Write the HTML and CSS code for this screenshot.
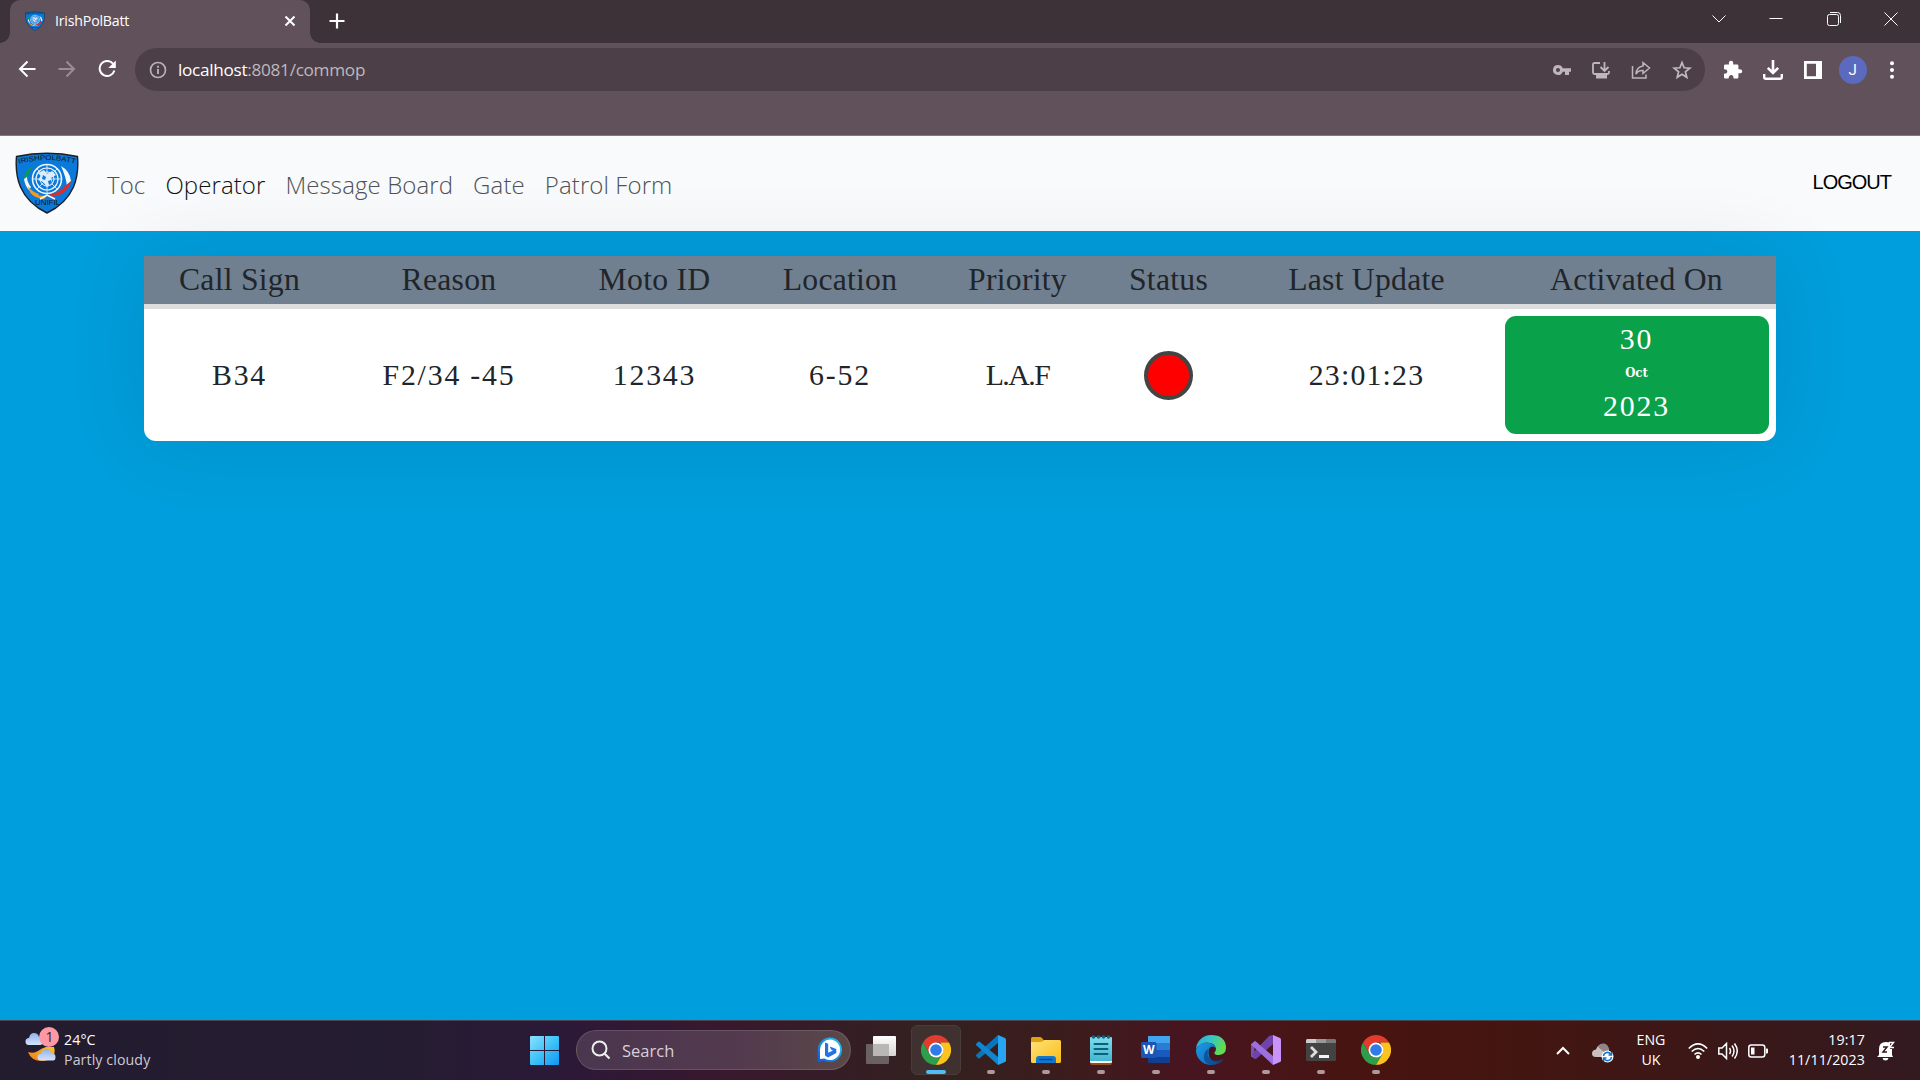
FILE: index.html
```html
<!DOCTYPE html>
<html lang="en">
<head>
<meta charset="utf-8">
<title>IrishPolBatt</title>
<link rel="stylesheet" href="styles.css">
</head>
<body>
<svg width="0" height="0" class="defs" aria-hidden="true">
  <defs>
    <linearGradient id="win" x1="0" y1="0" x2="1" y2="1"><stop offset="0" stop-color="#8be1fd"/><stop offset=".5" stop-color="#3fc3f9"/><stop offset="1" stop-color="#0f96f4"/></linearGradient>
    <linearGradient id="folder" x1="0" y1="0" x2="1" y2="1"><stop offset="0" stop-color="#ffe27a"/><stop offset="1" stop-color="#fbbc15"/></linearGradient>
    <linearGradient id="note" x1="0" y1="0" x2="0" y2="1"><stop offset="0" stop-color="#7fdcec"/><stop offset="1" stop-color="#45b5d2"/></linearGradient>
    <linearGradient id="edgeTop" x1="0" y1="0" x2="1" y2=".4"><stop offset="0" stop-color="#2aa5dc"/><stop offset=".5" stop-color="#35c6c9"/><stop offset="1" stop-color="#63dc4e"/></linearGradient>
    <linearGradient id="edgeLow" x1="0" y1="0" x2="1" y2="1"><stop offset="0" stop-color="#1b9de2"/><stop offset="1" stop-color="#0b62c0"/></linearGradient>
    <linearGradient id="bing" x1="0" y1="1" x2="1" y2="0"><stop offset="0" stop-color="#1555d6"/><stop offset="1" stop-color="#23d0f2"/></linearGradient>
    <linearGradient id="pane" x1="0" y1="0" x2="0" y2="1"><stop offset="0" stop-color="#fff"/><stop offset="1" stop-color="#d6d3d3"/></linearGradient>
    <linearGradient id="cloud" x1="0" y1="0" x2="0" y2="1"><stop offset="0" stop-color="#8fb2ee"/><stop offset="1" stop-color="#d5e3fa"/></linearGradient>
    <linearGradient id="moon" x1="0" y1="1" x2="1" y2="0"><stop offset="0" stop-color="#f07a16"/><stop offset="1" stop-color="#f9c52c"/></linearGradient>
    <symbol id="badge" viewBox="0 0 64 62">
      <path d="M1.500 4.500Q32-2 62.500 4.500Q64 22 58.500 35Q51 52 32 61Q13 52 5.500 35Q0 22 1.500 4.500Z" fill="#0a79d9" stroke="#1a1e25" stroke-width="1.400"/>
      <path id="arc" d="M4 12Q32 4 61 12" fill="none"/>
      <text class="badge-text"><textPath href="#arc" textLength="57" lengthAdjust="spacingAndGlyphs">IRISHPOLBATT</textPath></text>
      <g fill="none" stroke="#eef6fd">
        <circle cx="32" cy="27" r="14.500" stroke-width="1.600"/><circle cx="32" cy="27" r="11" stroke-width="1.200"/><circle cx="32" cy="27" r="7" stroke-width="1"/>
        <path d="M32 12V42M17 27H47M21.500 16.500L42.500 37.500M42.500 16.500L21.500 37.500" stroke-width=".8"/>
      </g>
      <path d="M23 21l6-3 3 4 5-3 4 4-5 3 2 5-6 4-4-5-5-2 3-4z" fill="#dcecfa"/>
      <path d="M28 23l3 2-1 3-3-1zM33 29l3-1 1 3-3 2z" fill="#0a79d9"/>
      <path d="M18 14q-9 4-9 14l3 2q0-7 6-16z" fill="#0c9a4d"/>
      <path d="M9 27q1 7 5 11l2-3q-4-5-4-10z" fill="#f4f7fa"/>
      <path d="M13 36q6 9 19 8l-3 3q-11 0-16-11z" fill="#f49a1c"/>
      <path d="M13 34q4 6 11 8l-3 3q-7-3-8-11z" fill="#f49a1c"/>
      <path d="M46 14q9 5 10 15l-4 5q-1-9-6-20z" fill="#f4f7fa"/>
      <path d="M56 29q-2 13-20 16l-4-2q13-2 18-9z" fill="#e02b2b"/>
      <path d="M25 47l7-4 8 4" stroke="#fff" stroke-width="1.500" fill="none"/>
      <text x="20" y="53" textLength="25" lengthAdjust="spacingAndGlyphs" class="badge-text">UNIFIL</text>
    </symbol>
    <symbol id="chrome" viewBox="0 0 30 30">
      <path d="M15 0A15 15 0 0 1 28 7.500H15L8.500 18.800 2 7.500A15 15 0 0 1 15 0Z" fill="#e33b2e"/>
      <path d="M2 7.500L8.500 18.750Q11 22.500 15 22.500L21.500 18.750 15 30A15 15 0 0 1 2 7.500Z" fill="#2f9e4b"/>
      <path d="M28 7.500A15 15 0 0 1 15 30L21.500 18.750Q23.800 13 19 7.500Z" fill="#fcc31e"/>
      <circle cx="15" cy="15" r="7.500" fill="#fff"/><circle cx="15" cy="15" r="5.800" fill="#2f7be8"/>
    </symbol>
  </defs>
</svg>

<div class="screen">
  <header class="tabstrip">
    <div class="tab">
      <svg class="favicon" width="20" height="20"><use href="#badge"/></svg>
      <span class="tab-title">IrishPolBatt</span>
      <svg width="12" height="12" viewBox="0 0 12 12"><path d="M1.500 1.500l9 9M10.500 1.500l-9 9" stroke="#fff" stroke-width="2"/></svg>
    </div>
    <svg class="new-tab" width="16" height="16" viewBox="0 0 16 16"><path d="M8 .5v15M.5 8h15" stroke="#fff" stroke-width="2.200"/></svg>
    <div class="window-controls">
      <svg width="14" height="14" viewBox="0 0 14 14"><path d="M.5 3.500L7 10l6.500-6.500" class="thin"/></svg>
      <svg width="14" height="14" viewBox="0 0 14 14"><path d="M.5 6.500h13" class="thin"/></svg>
      <svg width="14" height="14" viewBox="0 0 14 14"><path d="M3 .5h7.500a3 3 0 0 1 3 3V11" class="thin"/><rect x=".5" y="2.500" width="11" height="11" rx="2" class="thin"/></svg>
      <svg width="14" height="14" viewBox="0 0 14 14"><path d="M.5.5l13 13M13.500.5l-13 13" class="thin"/></svg>
    </div>
  </header>

  <div class="toolbar">
    <div class="history">
      <svg width="18" height="18" viewBox="0 0 18 18"><path d="M17.500 9H2M9.500 1.500L2 9l7.500 7.500" class="line" stroke="#fff" stroke-width="2"/></svg>
      <svg width="18" height="18" viewBox="0 0 18 18"><path d="M.5 9H16M8.500 1.500L16 9l-7.500 7.500" class="line" stroke="#998d96" stroke-width="2"/></svg>
      <svg width="18" height="18" viewBox="0 0 18 18"><path d="M15 3.700A7.500 7.500 0 1 0 16.400 10.500" class="line" stroke="#fff" stroke-width="2"/><path d="M17.800.5V8h-7.500z" fill="#fff"/></svg>
    </div>
    <div class="omnibox">
      <svg width="18" height="18" viewBox="0 0 18 18"><circle cx="9" cy="9" r="7.500" class="line" stroke="#b8b1b6" stroke-width="1.700"/><path d="M9 8v5M9 4.800v1.900" stroke="#b8b1b6" stroke-width="1.900"/></svg>
      <div class="url"><span class="host">localhost</span>:8081/commop</div>
      <div class="page-actions">
        <svg width="18" height="20" viewBox="0 0 18 20"><path d="M5 5a5 5 0 1 0 4.700 6.700H12V15h4v-3.300h2V8.300H9.700A5 5 0 0 0 5 5zm0 3a2 2 0 1 1 0 4 2 2 0 0 1 0-4z" fill="#bdb7bb"/></svg>
        <svg width="18" height="20" viewBox="0 0 18 20"><path d="M8 3H2.500Q1 3 1 4.500v8Q1 14 2.500 14h13q1.500 0 1.500-1.500V11M12.500 2v8M8.500 7l4 4 4-4" class="line" stroke="#bdb7bb" stroke-width="1.800"/><path d="M4 15h11v3.500H4z" fill="#bdb7bb"/></svg>
        <svg width="20" height="20" viewBox="0 0 20 20"><path d="M1.500 6v12h13.500v-3.500M12 6V2.500L18.500 8 12 13.500V10.500Q7.500 10 5 14 5.500 7 12 6z" class="line" stroke="#bdb7bb" stroke-width="1.500"/></svg>
        <svg width="20" height="20" viewBox="0 0 20 20"><path d="M10 2.500l2.100 5.300 5.700.4-4.400 3.600 1.400 5.500L10 14.300l-4.800 3 1.400-5.500-4.400-3.600 5.700-.4z" class="line" stroke="#c1bbbf" stroke-width="1.700"/></svg>
      </div>
    </div>
    <div class="browser-actions">
      <svg width="20" height="20" viewBox="0 0 20 20"><path d="M2.500 4.500H6q-.7-3.800 2-3.800t2.200 3.800h4q1.200 0 1.200 1.200v3.600q3.800-.4 3.800 2t-3.800 2v4q0 1.200-1.200 1.200h-3.600q0-3.500-2.400-3.500T5.600 18.500H2.200Q1 18.500 1 17.300v-3.600q3.300 0 3.300-2.200T1 9.200V5.700q0-1.200 1.500-1.200z" fill="#fff"/></svg>
      <svg width="20" height="20" viewBox="0 0 20 20"><path d="M10 0v12M4.800 7.800L10 13l5.200-5.200" class="line" stroke="#fff" stroke-width="2.600"/><path d="M1.200 14v3q0 1.700 1.700 1.700h14.200q1.700 0 1.700-1.700v-3" class="line" stroke="#fff" stroke-width="2.400"/></svg>
      <svg width="18" height="18" viewBox="0 0 18 18"><path d="M0 0h18v18H0zM2.800 2.800v12.400H12V2.800z" fill="#fff" fill-rule="evenodd"/></svg>
      <span class="avatar">J</span>
      <svg width="4" height="18" viewBox="0 0 4 18"><g fill="#fff"><circle cx="2" cy="2.200" r="2"/><circle cx="2" cy="9" r="2"/><circle cx="2" cy="15.800" r="2"/></g></svg>
    </div>
  </div>

  <main class="page">
    <nav class="navbar">
      <svg class="brand" width="64" height="62"><use href="#badge"/></svg>
      <div class="links">
        <a>Toc</a><a class="active">Operator</a><a>Message Board</a><a>Gate</a><a>Patrol Form</a>
      </div>
      <a class="logout">LOGOUT</a>
    </nav>
    <section class="calls">
      <div class="row head">
        <span>Call Sign</span><span>Reason</span><span>Moto ID</span><span>Location</span><span>Priority</span><span>Status</span><span>Last Update</span><span>Activated On</span>
      </div>
      <div class="row body">
        <span>B34</span><span>F2/34 -45</span><span>12343</span><span>6-52</span><span class="priority">L.A.F</span><i class="dot"></i><span class="time">23:01:23</span>
        <div class="date"><span>30</span><b>Oct</b><span>2023</span></div>
      </div>
    </section>
  </main>

  <footer class="taskbar">
    <div class="weather">
      <svg width="36" height="38" viewBox="0 0 36 38">
        <path d="M3 25q6 2 10-1t8-4h8q2 6-2 10-4 4-10 4Q6 34 3 25z" fill="url(#moon)"/>
        <path d="M4 18q-3.500 0-3.500-3.500T4 11q1-5 5-5t5 4q4 0 4 4t-3 4z" fill="url(#cloud)"/>
        <path d="M16 33.500q-3.500 0-3.500-3.500t3.500-3q1-5 5-5t5 4q4.500 0 4.500 4t-3 3.500z" fill="url(#cloud)"/>
        <circle cx="24" cy="10" r="10" fill="#ff98a5"/><text x="24.500" y="15" class="count">1</text>
      </svg>
      <div class="weather-text"><div>24°C</div><div class="dim">Partly cloudy</div></div>
    </div>

    <div class="apps">
      <svg class="start" width="29" height="29" viewBox="0 0 29 29"><path d="M1 0h13v14H0V1Q0 0 1 0zM15 0h13q1 0 1 1v13H15zM0 15h14v14H1q-1 0-1-1zM15 15h14v13q0 1-1 1H15z" fill="url(#win)"/></svg>
      <div class="search">
        <svg width="20" height="20" viewBox="0 0 20 20"><circle cx="8.500" cy="8.500" r="7" fill="none" stroke="#eee" stroke-width="2"/><path d="M13.500 13.500l5 5" stroke="#eee" stroke-width="2.200"/></svg>
        <span>Search</span>
        <svg width="26" height="26" viewBox="0 0 26 26"><path d="M13 .5A12.300 12.300 0 1 1 7 23.700L.7 25.500V13A12.300 12.300 0 0 1 13 .5z" fill="url(#bing)"/><path d="M13 2.500A10.300 10.300 0 1 1 7.500 21.600L3 22V13A10.300 10.300 0 0 1 13 2.500z" fill="#fff"/><path d="M8 5.500l3.200 1.200v9L16 13.500l-2-1-1.200-3 6.500 2.500v4L11 20.500 8 18.500z" fill="#2273e6"/></svg>
      </div>
      <svg class="taskview" width="30" height="28" viewBox="0 0 30 28"><rect x="7" width="23" height="20" rx="1" fill="url(#pane)"/><rect y="8" width="23" height="20" rx="1" fill="#767170" fill-opacity=".82"/><path d="M7 8h16v12H7z" fill="#b9b7b6"/></svg>
      <div class="app current"><svg width="30" height="30"><use href="#chrome"/></svg></div>
      <div class="app"><svg width="30" height="30" viewBox="0 0 30 30"><path d="M22 0L22 8 4 23Q3 24 2 23L.5 21.500Q-.5 20.500.5 19.500z" fill="#0a74bd"/><path d="M.5 10.500Q-.5 9.500.5 8.500L2 7Q3 6 4 7L22 22V30z" fill="#1186cf"/><path d="M22 0l7 3q1 .5 1 1.500v21q0 1-1 1.500l-7 3z" fill="#27a4f2"/></svg></div>
      <div class="app"><svg width="30" height="30" viewBox="0 0 30 30"><path d="M0 3.500Q0 2 1.500 2H9q1.500 0 2.500 1.500l1 1.500H28v8H0z" fill="#e0a10c"/><path d="M0 7h9.500Q11 7 12 6t2-1h14.500Q30 5 30 6.500v20Q30 28 28.500 28h-27Q0 28 0 26.500z" fill="url(#folder)"/><path d="M5 28v-4q0-3 3-3h14q3 0 3 3v4z" fill="#1277ce"/><path d="M9 24.500h12" stroke="#084a8d" stroke-width="1.500" stroke-linecap="round"/></svg></div>
      <div class="app"><svg width="30" height="30" viewBox="0 0 30 30"><path d="M4 27h22v1q0 2-2 2H6q-2 0-2-2z" fill="#9c4a17"/><rect x="4" y="2" width="22" height="26" rx="1.500" fill="#f4f4f4"/><path d="M4 3.500Q4 2 5.500 2h19Q26 2 26 3.500V26H4z" fill="url(#note)"/><path d="M8.500 9h13M8.500 14h13M8.500 19h13" stroke="#0c6078" stroke-width="2" stroke-linecap="round"/><g fill="#0f6a84"><circle cx="7.500" cy="2" r="1.800"/><circle cx="12.500" cy="2" r="1.800"/><circle cx="17.500" cy="2" r="1.800"/><circle cx="22.500" cy="2" r="1.800"/></g></svg></div>
      <div class="app"><svg width="30" height="30" viewBox="0 0 30 30"><path d="M7 1h22v7H7z" fill="#41a5ee"/><path d="M7 8h22v7H7z" fill="#2b7cd3"/><path d="M7 15h22v7H7z" fill="#185abd"/><path d="M7 22h22v6H8.500Q7 28 7 26.500z" fill="#103f91"/><rect y="7" width="15.500" height="16" rx="1.500" fill="#1b55b5"/><text x="7.700" y="19" class="word">W</text></svg></div>
      <div class="app"><svg width="30" height="30" viewBox="0 0 30 30"><path d="M0 14A15 15 0 0 1 15 0Q29.500 0 30 12.500 30 19.500 23 20q-5 0-4.500-2.500 1.500-1.500 1.500-4Q19 7.500 10.500 7.500 3.500 8 0 14z" fill="url(#edgeTop)"/><path d="M0 14.500Q3 7.500 10.500 7.500q8 .5 9.200 5.500Q13 8.500 12.500 18q.5 8 9.500 10Q18 30 14.500 30A15 15 0 0 1 0 14.500z" fill="url(#edgeLow)"/><path d="M13 14Q9.500 20 15 24.500q6 3 13-.8Q24 30 15 30 7 28 8 20q1-5 5-6z" fill="#114a8b" fill-opacity=".8"/></svg></div>
      <div class="app"><svg width="30" height="30" viewBox="0 0 30 30"><path d="M0 9l4-3 3.500 2.500v13L4 24l-4-2.500zM3.500 11v8l3.500-4z" fill="#7653b5" fill-rule="evenodd"/><path d="M3 22.500L1 19 18 1l4-1v9L5 24z" fill="#6e44ab"/><path d="M0 9.500L4 6 22 21v9z" fill="#9d70dd"/><path d="M22 0l7 3q1 .5 1 1.500v21q0 1-1 1.500l-7 3z" fill="#c894fa"/></svg></div>
      <div class="app"><svg width="30" height="30" viewBox="0 0 30 30"><rect y="4" width="30" height="22" rx="1.500" fill="#434343"/><path d="M1.500 4H10v4H0V5.500Q0 4 1.500 4z" fill="#ccc"/><path d="M10 4h10v4H10z" fill="#999"/><path d="M20 4h8.500Q30 4 30 5.500V8H20z" fill="#777"/><path d="M5 12l5 5-5 5" fill="none" stroke="#ddd" stroke-width="2.800"/><path d="M13 20h10v3H13z" fill="#f4f4f4"/></svg></div>
      <div class="app"><svg width="30" height="30"><use href="#chrome"/></svg></div>
    </div>

    <div class="tray">
      <svg width="14" height="10" viewBox="0 0 14 10"><path d="M1 8l6-6 6 6" class="line" stroke="#fff" stroke-width="2"/></svg>
      <svg class="drive" width="22" height="20" viewBox="0 0 22 20"><path d="M4 14Q0 14 0 10.500T4 6.500Q6 1 11 1q5 0 6 6v7z" fill="#c9c0bf"/><path d="M6 4q2-4 6-3.500T17 7l-5 2z" fill="#908584"/><circle cx="15.500" cy="13.500" r="6" fill="#fff"/><path d="M11.500 13a4 4 0 0 1 7.500-1.500M19.500 14a4 4 0 0 1-7.500 1.500M19.500 9v3h-3M11.500 18v-3h3" class="line" stroke="#1474cf" stroke-width="1.500"/></svg>
      <div class="lang"><div>ENG</div><div>UK</div></div>
      <svg class="wifi" width="20" height="16" viewBox="0 0 20 16"><g class="line" stroke="#fff" stroke-width="1.600"><path d="M.8 5.500Q10-3.700 19.200 5.500M3.700 8.500q6.300-6 12.600 0M6.500 11.500q3.500-3.200 7 0"/></g><circle cx="10" cy="14" r="2" fill="#fff"/></svg>
      <svg class="volume" width="20" height="18" viewBox="0 0 20 18"><g class="line" stroke="#fff" stroke-width="1.500"><path d="M.8 6H4l4.500-4.500v15L4 12H.8zM11.500 6q2 3 0 6M14 3.500q4 5.500 0 11M16.500 1.500q5.500 7.500 0 15"/></g></svg>
      <svg class="battery" width="20" height="14" viewBox="0 0 20 14"><rect x=".8" y="1" width="16" height="12" rx="2.500" class="line" stroke="#fff" stroke-width="1.500"/><path d="M3 3.500h3.500v7H3zM18 4.500h1q1 0 1 1v3q0 1-1 1h-1z" fill="#fff"/></svg>
      <div class="clock"><div>19:17</div><div>11/11/2023</div></div>
      <svg class="bell" width="18" height="20" viewBox="0 0 18 20"><path d="M2 14V8q0-7 7-7l4 .5V8h2v6l1 2H0zM5.500 17h6q-.5 2.500-3 2.500t-3-2.500z" fill="#fff"/><path d="M6 6h4l-4 5h4" class="line" stroke="#36191a" stroke-width="1.500"/><path d="M12 1.500h4.500l-4 5H17" class="line" stroke="#fff" stroke-width="1.500"/></svg>
    </div>
  </footer>
</div>
</body>
</html>
```
FILE: styles.css
```css
* { box-sizing: border-box; }
body { margin: 0; overflow: hidden; font-family: "Open Sans", "Noto Sans", sans-serif; }
svg { display: block; flex: none; }
.defs { position: absolute; }
.line { fill: none; }
.thin { fill: none; stroke: #fff; stroke-width: 1; }
.badge-text { font: 7px "Liberation Sans", sans-serif; fill: #10151c; }
.screen { width: 1920px; height: 1080px; display: flex; flex-direction: column; white-space: nowrap; }

/* Browser window */
.tabstrip { height: 43px; background: #3e3239; display: flex; padding-left: 10px; flex: none; }
.tab { position: relative; width: 300px; background: #61515b; border-radius: 10px 10px 0 0; display: flex; align-items: center; padding: 0 14px 2px 15px; color: #fff; font-size: 14.200px; }
.tab::before, .tab::after { content: ""; position: absolute; bottom: 0; width: 10px; height: 10px; }
.tab::before { left: -10px; background: radial-gradient(circle at 0 0, transparent 9.500px, #61515b 10px); }
.tab::after { right: -10px; background: radial-gradient(circle at 100% 0, transparent 9.500px, #61515b 10px); }
.tab-title { flex: 1; margin-left: 10px; letter-spacing: -.2px; }
.new-tab { margin: 13px 0 0 19px; }
.window-controls { margin: 12px 22px 0 auto; display: flex; gap: 43.300px; }
.toolbar { height: 93px; flex: none; background: #61515b; border-bottom: 1px solid #857680; display: flex; align-items: flex-start; padding: 5px 26px 0 18px; }
.history { height: 41px; width: 117px; display: flex; align-items: center; gap: 22px; }
.omnibox { width: 1570px; height: 43px; border-radius: 22px; background: #4c3f48; display: flex; align-items: center; padding: 0 13px 0 14px; }
.url { margin: -1px 0 0 11px; flex: 1; color: #bfb8bd; font-size: 17.200px; letter-spacing: -.3px; }
.host { color: #fff; }
.page-actions { display: flex; gap: 21px; }
.browser-actions { height: 43px; flex: 1; display: flex; align-items: center; justify-content: space-between; padding-left: 18px; }
.avatar { width: 28px; height: 28px; margin: 0 3px 0 -3px; border-radius: 50%; background: #5b6abf; color: #fff; display: grid; place-items: center; font: 15px Roboto, sans-serif; }

/* Web page */
.page { flex: 1; background: #009edc; overflow: hidden; min-height: 0; }
.navbar { height: 95px; background: #f8fafc; display: flex; align-items: center; padding: 0 29px 0 15px; }
.brand { margin-top: -1px; }
.links { display: flex; gap: 20px; margin: 1px 0 0 28px; font-size: 24px; font-weight: 350; color: #505254; letter-spacing: .1px; }
.links .active { color: #111; }
.logout { margin: -3px 0 0 auto; font: 20px "Liberation Sans", sans-serif; letter-spacing: -1px; color: #000; }
.calls { position: relative; width: 1632px; height: 185px; margin: 25px auto 0; border-radius: 0 0 12px 12px; background: #fff; box-shadow: 0 0 80px rgba(0, 0, 0, .1); font-family: "Liberation Serif", serif; color: #212529; }
.row { display: grid; grid-template-columns: 191px 228px 183px 188px 167px 135px 261px 279px; align-items: center; justify-items: center; }
.head { height: 53px; background: #708090; border-bottom: 5px solid #ddd; font-size: 31.700px; letter-spacing: .25px; }
.body { height: 132px; font-size: 29.800px; letter-spacing: 1.800px; }
.priority { letter-spacing: -1.500px; }
.time { letter-spacing: 1.200px; }
.dot { width: 49px; height: 49px; border-radius: 50%; background: #f00; border: 4px solid #444; }
.date { width: 264px; height: 118px; border-radius: 11px; background: #0aa14b; color: #fff; display: flex; flex-direction: column; align-items: center; line-height: 34px; padding-top: 6px; }
.date b { font: bold 13px/33px "DejaVu Serif Condensed", "DejaVu Serif", serif; letter-spacing: 0; }

/* Taskbar */
.taskbar { height: 60px; flex: none; border-top: 1px solid #4b434f; color: #fff; background: linear-gradient(90deg, #231b2e 0, #251c32 420px, #2b1938 560px, #38182e 720px, #33211f 930px, #3c1c1d 1070px, #471520 1190px, #481411 1350px, #451510 1480px, #38181a 1780px, #321a20 1920px); display: grid; grid-template-columns: 530px 1fr auto; font-size: 14.200px; line-height: 20px; }
.weather { display: flex; padding: 6px 0 0 25px; }
.weather-text { margin-left: 3px; padding-top: 3px; letter-spacing: .1px; }
.dim { color: #cfcad2; }
.count { font-size: 14px; fill: #3a1c22; text-anchor: middle; letter-spacing: 0; }
.word { font: bold 12px "Open Sans", sans-serif; fill: #fff; text-anchor: middle; }
.apps { display: flex; align-items: flex-start; }
.start { margin-top: 15px; }
.search { width: 275px; height: 40px; margin: 9px 15px 0 17px; border: 1px solid rgba(255, 255, 255, .13); border-radius: 20px; background: linear-gradient(90deg, #4b3650, #533a4e 60%, #5a4848); display: flex; align-items: center; padding: 0 7px 0 14px; font-size: 16.500px; color: #d8cfd8; }
.search span { flex: 1; margin: 1px 0 0 11px; }
.taskview { margin: 15px 12px 0 0; }
.app { width: 55px; height: 59px; display: flex; flex-direction: column; align-items: center; padding-top: 14px; }
.app::after { content: ""; width: 8px; height: 4px; margin-top: 5px; border-radius: 2px; background: #ad999c; }
.current { width: 50px; height: 50px; margin: 4px 0 0 3px; padding-top: 9px; border: 1px solid #4a3c3a; border-radius: 6px; background: #3e312f; }
.current::after { width: 20px; background: #4cbdf5; }
.current + .app { margin-left: 2px; }
.tray { display: flex; align-items: center; padding-right: 25px; }
.drive { margin: 4px 0 0 22px; }
.lang { width: 40px; margin: -1px 0 0 17px; text-align: center; }
.wifi { margin-left: 17px; }
.volume { margin-left: 10px; }
.battery { margin-left: 10px; }
.clock { width: 82px; margin: -2px 0 0 15px; text-align: right; letter-spacing: .1px; }
.bell { margin: 0 0 0 12px; }
```
